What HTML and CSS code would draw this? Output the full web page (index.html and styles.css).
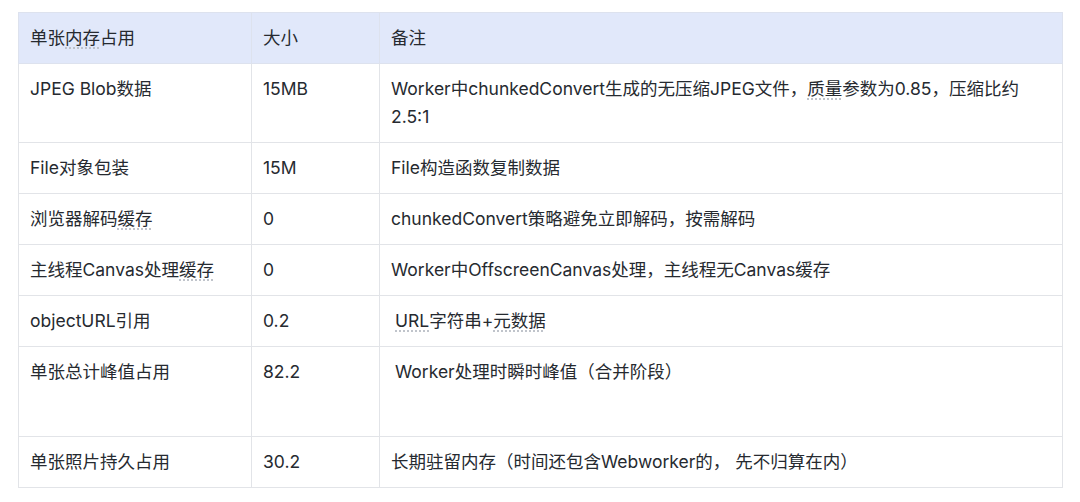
FILE: index.html
```html
<!DOCTYPE html>
<html lang="zh-CN">
<head>
<meta charset="utf-8">
<link rel="stylesheet" href="styles.css">
</head>
<body>
<table class="mem">
  <colgroup>
    <col class="c1">
    <col class="c2">
    <col class="c3">
  </colgroup>
  <thead>
    <tr>
      <th>单张<span class="sp">内存</span>占用</th>
      <th>大小</th>
      <th>备注</th>
    </tr>
  </thead>
  <tbody>
    <tr>
      <td>JPEG Blob数据</td>
      <td>15MB</td>
      <td>Worker中chunkedConvert生成的无压缩JPEG文件，<span class="sp">质量</span>参数为0.85，压缩比约2.5:1</td>
    </tr>
    <tr>
      <td>File对象包装</td>
      <td>15M</td>
      <td>File构造函数复制数据</td>
    </tr>
    <tr>
      <td>浏览器解码<span class="sp">缓存</span></td>
      <td>0</td>
      <td>chunkedConvert策略避免立即解码，按需解码</td>
    </tr>
    <tr>
      <td>主线程Canvas处理<span class="sp">缓存</span></td>
      <td>0</td>
      <td>Worker中OffscreenCanvas处理，主线程无Canvas缓存</td>
    </tr>
    <tr>
      <td>objectURL引用</td>
      <td>0.2</td>
      <td class="ind"><span class="sp">URL</span>字符串+<span class="sp">元数据</span></td>
    </tr>
    <tr class="tall">
      <td>单张总计峰值占用</td>
      <td>82.2</td>
      <td class="ind">Worker处理时瞬时峰值（合并阶段）</td>
    </tr>
    <tr>
      <td>单张照片持久占用</td>
      <td>30.2</td>
      <td>长期驻留内存（时间还包含Webworker的， 先不归算在内）</td>
    </tr>
  </tbody>
</table>
</body>
</html>
```

FILE: styles.css
```css
html, body {
  margin: 0;
  background: #ffffff;
}
body {
  padding: 12px 18px;
  font-family: "Inter", "Noto Sans CJK SC", sans-serif;
  color: #262a30;
}
.mem {
  width: 1044px;
  border-collapse: collapse;
  table-layout: fixed;
  font-size: 17.5px;
  line-height: 28px;
}
.c1 { width: 233px; }
.c2 { width: 128px; }
.c3 { width: 683px; }
.mem th,
.mem td {
  border: 1px solid #e2e4e8;
  padding: 11px 11px;
  text-align: left;
  vertical-align: top;
  font-weight: 400;
}
.mem thead th {
  background: #e1e8fa;
  border-color: #dde2ee;
}
.mem td.ind {
  padding-left: 15px;
}
.mem tr.tall td {
  height: 67px;
}
.sp {
  text-decoration: underline dotted #b8bcc4;
  text-underline-offset: 4px;
}
```
